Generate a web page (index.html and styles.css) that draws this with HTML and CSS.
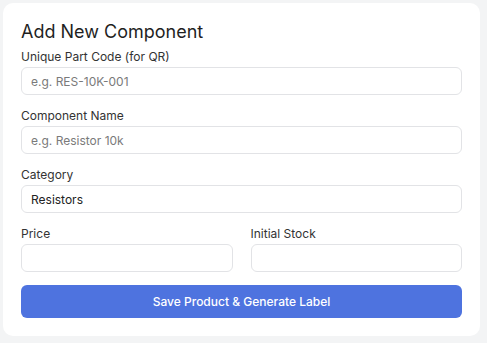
FILE: index.html
```html
<!DOCTYPE html>
<html lang="en">
<head>
	<meta charset="UTF-8">
	<title>Add New Component</title>
	<meta name="viewport" content="width=device-width, initial-scale=1">
	<link rel="stylesheet" href="styles.css">
</head>
<body>
<main class="card">
	<h2 class="card-title">Add New Component</h2>
	<form id="add-component">
		<div class="field">
			<label for="part-code">Unique Part Code (for QR)</label>
			<input id="part-code" type="text" placeholder="e.g. RES-10K-001">
		</div>
		<div class="field">
			<label for="part-name">Component Name</label>
			<input id="part-name" type="text" placeholder="e.g. Resistor 10k">
		</div>
		<div class="field">
			<label for="part-category">Category</label>
			<select id="part-category">
				<option>Resistors</option>
				<option>Capacitors</option>
				<option>ICs</option>
			</select>
		</div>
		<div class="field-row">
			<div class="field">
				<label for="part-price">Price</label>
				<input id="part-price" type="number">
			</div>
			<div class="field">
				<label for="part-stock">Initial Stock</label>
				<input id="part-stock" type="number">
			</div>
		</div>
		<button class="btn-primary" type="submit">Save Product &amp; Generate Label</button>
	</form>
</main>
</body>
</html>
```

FILE: styles.css
```css
*,
::before,
::after {
	box-sizing: border-box;
}
body {
	margin: 0;
	padding: 3px 7px 8px 3px;
	background: #f3f4f5;
	font-family: Inter, "Noto Sans", sans-serif;
	color: #222;
}
.card {
	background: #fff;
	border-radius: 10px;
	padding: 18px 18px 18px;
}
.card-title {
	margin: 0 0 6px;
	font-size: 18px;
	line-height: 22px;
	font-weight: 400;
	color: #1f1f1f;
}
.field {
	margin-bottom: 13px;
}
.field label {
	display: block;
	font-size: 12px;
	line-height: 15px;
	margin-bottom: 3px;
	color: #333;
}
.field input,
.field select {
	display: block;
	width: 100%;
	height: 28px;
	padding: 0 9px;
	border: 1px solid #e2e3e6;
	border-radius: 6px;
	background: #fff;
	font: inherit;
	font-size: 12px;
	color: #222;
	appearance: none;
	outline: none;
}
.field input::placeholder {
	color: #7a7a7a;
}
.field-row {
	display: grid;
	grid-template-columns: 1fr 1fr;
	gap: 18px;
}
.btn-primary {
	display: block;
	width: 100%;
	height: 33px;
	border: 0;
	border-radius: 6px;
	background: #4e73df;
	color: #fff;
	font: inherit;
	font-size: 12px;
	font-weight: 500;
}
```
